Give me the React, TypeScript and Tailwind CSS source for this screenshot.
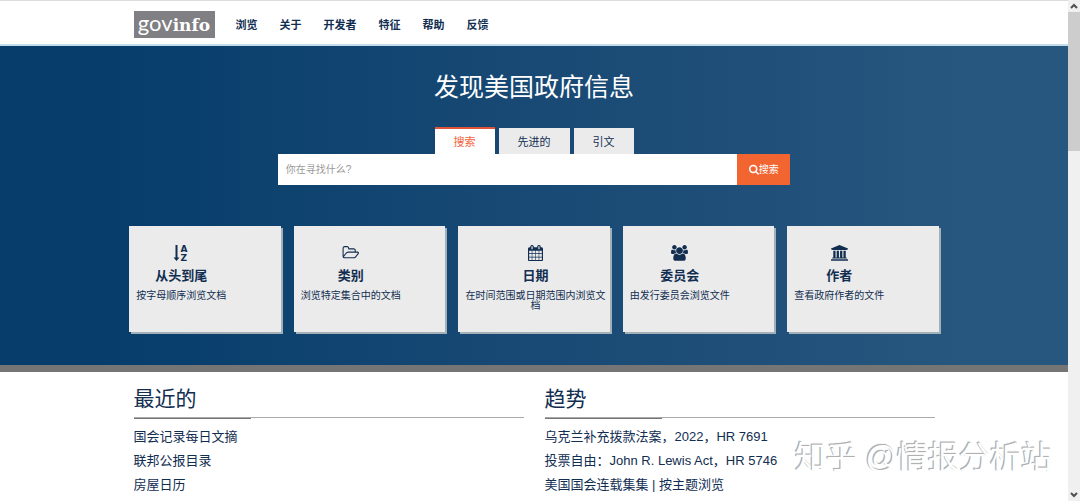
import React from "react";

interface IconShape {
  viewBox: string;
  width: string;
  path: string;
}

interface BrowseCard {
  title: string;
  text: string;
  icon: React.ReactNode;
}

interface ListSection {
  id: string;
  title: string;
  items: string[];
}

const Icon: React.FC<IconShape> = ({ viewBox, width, path }) => (
  <svg viewBox={viewBox} className={`${width} fill-current`} aria-hidden="true">
    <path d={path} />
  </svg>
);

const SortIcon: React.FC = () => (
  <svg viewBox="0 0 16 16" className="h-4 w-4 overflow-visible fill-current" aria-hidden="true">
    <path d="M2.500 0h2v12.500H6.500l-3 3.500L0.500 12.500h2z" />
    <text x="7.500" y="7" fontSize="9" fontWeight="700" fontFamily="DejaVu Sans, sans-serif">A</text>
    <text x="7.500" y="16" fontSize="9" fontWeight="700" fontFamily="DejaVu Sans, sans-serif">Z</text>
  </svg>
);

const folderPath =
  "M1845 931q0-35-53-35h-1088q-40 0-85.500 21.500t-71.500 52.500l-294 363q-18 24-18 40 0 35 53 35h1088q40 0 86-22t71-53l294-363q18-22 18-39zm-1141-163h768v-160q0-40-28-68t-68-28h-576q-40 0-68-28t-28-68v-64q0-40-28-68t-68-28h-320q-40 0-68 28t-28 68v853l256-315q44-53 116-87.500t140-34.500zm1269 163q0 62-46 120l-295 363q-43 53-116 87.500t-140 34.500h-1088q-92 0-158-66t-66-158v-960q0-92 66-158t158-66h320q92 0 158 66t66 158v32h544q92 0 158 66t66 158v160h192q54 0 99 24.500t67 70.500q15 32 15 68z";

const calendarPath =
  "M128 1664h288v-288h-288v288zm352 0h320v-288h-320v288zm-352-352h288v-320h-288v320zm352 0h320v-320h-320v320zm-352-384h288v-288h-288v288zm736 736h320v-288h-320v288zm-384-736h320v-288h-320v288zm768 736h288v-288h-288v288zm-384-352h320v-320h-320v320zm-352-864v-288q0-13-9.500-22.500t-22.500-9.500h-64q-13 0-22.500 9.500t-9.500 22.500v288q0 13 9.500 22.500t22.500 9.500h64q13 0 22.500-9.500t9.500-22.500zm736 864h288v-320h-288v320zm-384-384h320v-288h-320v288zm384 0h288v-288h-288v288zm32-480v-288q0-13-9.500-22.500t-22.500-9.500h-64q-13 0-22.500 9.500t-9.500 22.500v288q0 13 9.500 22.500t22.500 9.500h64q13 0 22.500-9.500t9.500-22.500zm384-64v1280q0 52-38 90t-90 38h-1408q-52 0-90-38t-38-90v-1280q0-52 38-90t90-38h128v-96q0-66 47-113t113-47h64q66 0 113 47t47 113v96h384v-96q0-66 47-113t113-47h64q66 0 113 47t47 113v96h128q52 0 90 38t38 90z";

const usersPath =
  "M593 896q-162 5-265 128h-134q-82 0-138-40.500t-56-118.500q0-353 124-353 6 0 43.500 21t97.500 42.500 119 21.500q67 0 133-23-5 37-5 66 0 139 81 256zm1071 637q0 120-73 189.500t-194 69.500h-874q-121 0-194-69.500t-73-189.500q0-53 3.500-103.500t14-109 26.500-108.500 43-97.500 62-81 85.500-53.500 111.500-20q10 0 43 21.500t73 48 107 48 135 21.500 135-21.500 107-48 73-48 43-21.500q61 0 111.500 20t85.500 53.500 62 81 43 97.500 26.500 108.500 14 109 3.500 103.500zm-1024-1277q0 106-75 181t-181 75-181-75-75-181 75-181 181-75 181 75 75 181zm704 384q0 159-112.500 271.500t-271.500 112.500-271.500-112.500-112.500-271.500 112.500-271.500 271.500-112.500 271.500 112.500 112.500 271.500zm576 225q0 78-56 118.500t-138 40.500h-134q-103-123-265-128 81-117 81-256 0-29-5-66 66 23 133 23 59 0 119-21.500t97.500-42.500 43.500-21q124 0 124 353zm-128-609q0 106-75 181t-181 75-181-75-75-181 75-181 181-75 181 75 75 181z";

const universityPath =
  "M960 0l960 384v128h-128q0 26-20.500 45t-48.500 19h-1526q-28 0-48.500-19t-20.500-45h-128v-128zm-704 640h256v768h128v-768h256v768h128v-768h256v768h128v-768h256v768h59q28 0 48.500 19t20.500 45v64h-1664v-64q0-26 20.500-45t48.500-19h59v-768zm1595 960q28 0 48.500 19t20.500 45v128h-1920v-128q0-26 20.500-45t48.500-19h1782z";

const searchPath =
  "M1152 832q0-185-131.500-316.500t-316.500-131.500-316.500 131.500-131.500 316.500 131.500 316.500 316.500 131.500 316.500-131.500 131.500-316.500zm512 832q0 52-38 90t-90 38q-54 0-90-38l-343-342q-179 124-399 124-143 0-273.500-55.500t-225-150-150-225-55.500-273.500 55.500-273.500 150-225 225-150 273.500-55.500 273.500 55.500 225 150 150 225 55.500 273.500q0 220-124 399l343 343q37 37 37 90z";

const navLinks = ["浏览", "关于", "开发者", "特征", "帮助", "反馈"];

const searchTabs = ["搜索", "先进的", "引文"];

const browseCards: BrowseCard[] = [
  { title: "从头到尾", text: "按字母顺序浏览文档", icon: <SortIcon /> },
  { title: "类别", text: "浏览特定集合中的文档", icon: <Icon viewBox="0 0 1973 1792" width="w-[17px]" path={folderPath} /> },
  { title: "日期", text: "在时间范围或日期范围内浏览文档", icon: <Icon viewBox="0 0 1664 1792" width="w-[15px]" path={calendarPath} /> },
  { title: "委员会", text: "由发行委员会浏览文件", icon: <Icon viewBox="0 0 1920 1792" width="w-[17px]" path={usersPath} /> },
  { title: "作者", text: "查看政府作者的文件", icon: <Icon viewBox="0 0 1920 1792" width="w-[17px]" path={universityPath} /> },
];

const sections: ListSection[] = [
  { id: "recent", title: "最近的", items: ["国会记录每日文摘", "联邦公报目录", "房屋日历"] },
  {
    id: "trending",
    title: "趋势",
    items: ["乌克兰补充拨款法案，2022，HR 7691", "投票自由：John R. Lewis Act，HR 5746", "美国国会连载集集 | 按主题浏览"],
  },
];

const Header: React.FC = () => (
  <header className="border-t border-[#dcdcdc] bg-white">
    <div className="mx-auto flex h-[43px] w-3/4 items-center gap-[21px] pt-1">
      <a href="#home" className="flex h-[27px] w-[81px] items-baseline justify-center bg-[#808084] text-white">
        <span className="font-[Lato] text-[22px] leading-[23px]">gov</span>
        <span className="font-['DejaVu_Serif'] text-[17px] leading-[23px] font-bold">info</span>
      </a>
      <nav className="flex gap-[22px] pt-0.5 text-[11px] font-bold">
        {navLinks.map((link) => (
          <a key={link} href="#nav" className="hover:underline">{link}</a>
        ))}
      </nav>
    </div>
    <div className="h-0.5 bg-[#c3dcea]" />
  </header>
);

const SearchBox: React.FC = () => (
  <form className="mx-auto w-[48%]" onSubmit={(e) => e.preventDefault()}>
    <div className="flex items-end justify-center gap-1">
      {searchTabs.map((tab, index) => (
        <button
          key={tab}
          type="button"
          className={
            index === 0
              ? "h-[27px] border-t-2 border-[#e0553a] bg-white px-[19px] pt-0.5 text-[11px] text-[#f2643a]"
              : "h-[26px] bg-[#ebebeb] px-[19px] pt-[3px] text-[11px]"
          }
        >
          {tab}
        </button>
      ))}
    </div>
    <div className="flex h-[31px]">
      <input
        type="text"
        aria-label="搜索"
        placeholder="你在寻找什么?"
        className="min-w-0 flex-1 bg-white px-2 text-[10px] outline-none placeholder:text-[#999999]"
      />
      <button type="submit" className="flex w-[53px] items-center justify-center bg-[#f26531] text-[10px] text-white">
        <Icon viewBox="0 0 1664 1792" width="w-[10px]" path={searchPath} />
        搜索
      </button>
    </div>
  </form>
);

const App: React.FC = () => {
  return (
    <div className="relative flex h-screen overflow-hidden bg-white font-['Liberation_Sans','Noto_Sans_CJK_SC',sans-serif] text-[#112e51]">
      <div className="min-w-0 flex-1">
        <Header />
        <main>
          <section className="border-b-[7px] border-[#757575] bg-linear-to-r from-[#063d6b] from-10% to-[#27567e] to-90% pt-[23px] pb-[33px]">
            <h1 className="mb-[22px] text-center text-[25px] leading-9 text-white">发现美国政府信息</h1>
            <SearchBox />
            <div className="mx-auto mt-[41px] grid w-[76%] grid-cols-5 gap-[13px] px-px">
              {browseCards.map((card) => (
                <a
                  key={card.title}
                  href="#browse"
                  className="flex h-[106px] items-start bg-[#ebebeb] pt-[19px] pr-1 pl-[7px] shadow-[2px_2px_0_#a3b0b8]"
                >
                  <div className="flex flex-col items-center text-center">
                    <div className="flex h-4 items-center">{card.icon}</div>
                    <h2 className="mt-[5px] text-[13px] leading-5 font-bold">{card.title}</h2>
                    <p className="mt-[5px] text-[10px] leading-[10px]">{card.text}</p>
                  </div>
                </a>
              ))}
            </div>
          </section>
          <div className="mx-auto grid w-3/4 grid-cols-2 gap-[21px] pt-[11px]">
            {sections.map((section) => (
              <section key={section.id}>
                <h2 className="text-[21px] leading-8">{section.title}</h2>
                <div className="mt-0.5 border-t border-[#a9a9a9]">
                  <div className="h-px w-[30%] bg-[#757575]" />
                </div>
                <ul className="mt-1.5 text-[13px] leading-6">
                  {section.items.map((item) => (
                    <li key={item}>
                      <a href="#item" className="hover:underline">{item}</a>
                    </li>
                  ))}
                </ul>
              </section>
            ))}
          </div>
        </main>
      </div>
      <div className="flex w-3 flex-col items-center bg-[#f0f0f0] text-[#505050]" aria-hidden="true">
        <svg viewBox="0 0 12 12" className="h-3 w-3 fill-none stroke-current stroke-2">
          <path d="M3 8l3-3 3 3" />
        </svg>
        <div className="h-[139px] w-full bg-[#cdcdcd]" />
        <svg viewBox="0 0 12 12" className="mt-auto h-3 w-3 fill-none stroke-current stroke-2">
          <path d="M3 4l3 3 3-3" />
        </svg>
      </div>
      <p className="absolute right-7 bottom-7 text-[31px] leading-none text-white [text-shadow:-1px_-1px_0_#b0b0b0,-1px_-1px_1px_#a0a0a0]">
        知乎 @情报分析站
      </p>
    </div>
  );
};

export default App;
